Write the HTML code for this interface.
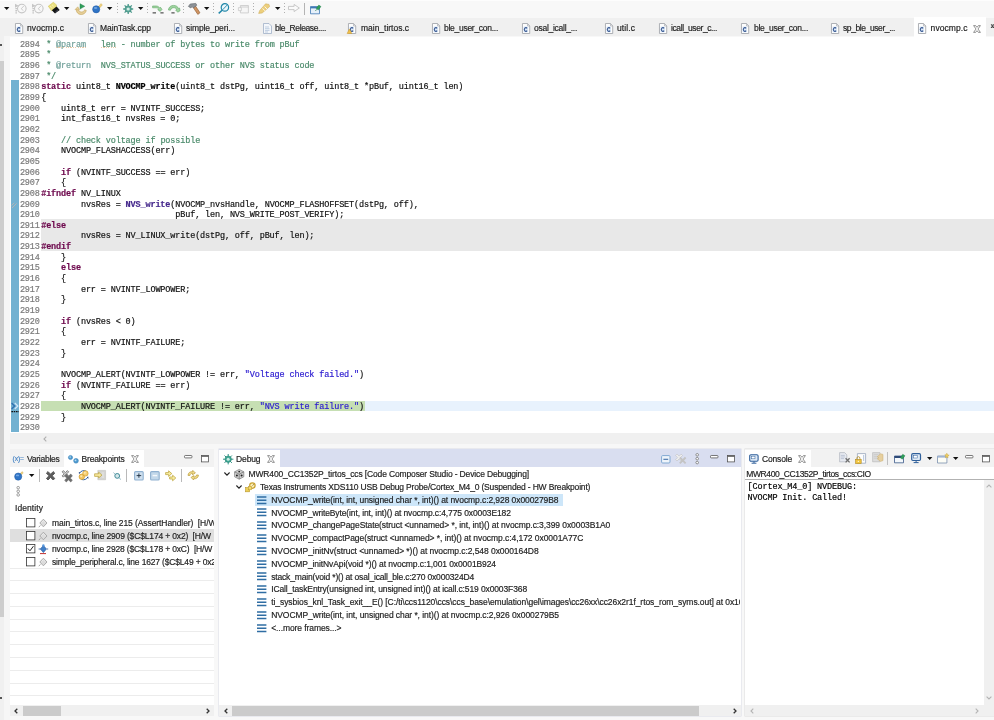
<!DOCTYPE html>
<html lang="en"><head><meta charset="utf-8"><title>Code Composer Studio</title>
<style>
html,body{margin:0;padding:0}
body{width:994px;height:720px;position:relative;overflow:hidden;background:#f8f8f8;font-family:"Liberation Sans",sans-serif;color:#1a1a1a}
#w{position:absolute;left:0;top:0;width:994px;height:720px;will-change:transform}
#w>div,#w>span,#w>svg{position:absolute}
span{-webkit-text-stroke:0.18px;white-space:pre;line-height:12px;margin-top:-5.6px}
.ui{font-size:8.5px;color:#1e1e1e}
.code{font-family:"Liberation Mono",monospace;font-size:8.5px;letter-spacing:-0.135px;color:#111;line-height:10.667px;margin-top:-5.33px}
.ln{font-family:"Liberation Mono",monospace;font-size:8.5px;letter-spacing:-0.135px;color:#7a7a7a;line-height:10.667px;margin-top:-5.33px}
.k{color:#6e0a4e;font-weight:bold}
.c{color:#4a8a6a}
.t{color:#6f9f98}
.s{color:#2a1ad0}
.f{font-weight:bold;color:#000}
.fc{color:#45288c;font-weight:bold}
.sq{text-decoration:underline wavy #e8c8a0 0.6px}
.con{font-family:"Liberation Mono",monospace;font-size:8.5px;letter-spacing:-0.135px;color:#000;line-height:10.667px;margin-top:-5.33px}
i{font-style:normal}
svg{overflow:visible}

</style></head>
<body>
<div id="w">
<div style="left:0px;top:0px;width:994px;height:18.2px;background:#f8f8f8;"></div><div style="left:0px;top:0px;width:994px;height:1.3px;background:#fdfdfd;"></div><div style="left:0px;top:18.2px;width:994px;height:18.3px;background:#f0f0f0;"></div><div style="left:0px;top:17.5px;width:10px;height:702.5px;background:#f0f0f0;"></div><div style="left:0px;top:60.5px;width:4px;height:556.2px;background:#cdcdcd;"></div><div style="left:10px;top:36.5px;width:984px;height:396.5px;background:#ffffff;"></div><div style="left:913.8px;top:16.6px;width:72.3px;height:20px;background:#ffffff;"></div><div style="left:10px;top:433px;width:984px;height:10.5px;background:#f0f0f0;"></div><div style="left:10px;top:443.5px;width:984px;height:6px;background:#f7f7f7;"></div><div style="left:41.3px;top:219.3px;width:952.7px;height:31.3px;background:#e8e8e8;"></div><div style="left:41.3px;top:401.0px;width:323.7px;height:10.2px;background:#c6dfb3;"></div><div style="left:365px;top:401.0px;width:629px;height:10.2px;background:#e8f2fd;"></div><div style="left:4px;top:36px;width:6px;height:684px;background:#f6f6f6;"></div><div style="left:11px;top:80px;width:8px;height:352.2px;background:#72b1d1;"></div><svg style="left:11px;top:401.5px" width="8" height="11" viewBox="0 0 8 11"><path d="M0.6 1l3 3-3 3" fill="none" stroke="#2f6fb0" stroke-width="1.3"/><path d="M3.8 1l3 3-3 3" fill="none" stroke="#cfe6fa" stroke-width="1.3"/><path d="M0.4 9.6h7.4" stroke="#111" stroke-width="1.2" stroke-dasharray="1.6 0.7"/></svg><svg style="left:10.5px;top:201.5px" width="7" height="7" viewBox="0 0 7 7"><path d="M0.6 3.4l2.6-2.6M1 6l4.6-4.6" fill="none" stroke="#b4b4b4" stroke-width="1"/></svg><span class="ln" style="left:19.9px;top:45.03px">2894</span><span class="code" style="left:41.2px;top:45.03px"><i class="c"> * </i><i class="t">@param</i><i class="c">   </i><i class="c">len</i><i class="c"> - number of bytes to write from pBuf</i></span><span class="ln" style="left:19.9px;top:55.68px">2895</span><span class="code" style="left:41.2px;top:55.68px"><i class="c"> *</i></span><span class="ln" style="left:19.9px;top:66.33px">2896</span><span class="code" style="left:41.2px;top:66.33px"><i class="c"> * </i><i class="t">@return</i><i class="c">  NVS_STATUS_SUCCESS or other NVS status code</i></span><span class="ln" style="left:19.9px;top:76.99px">2897</span><span class="code" style="left:41.2px;top:76.99px"><i class="c"> */</i></span><span class="ln" style="left:19.9px;top:87.64px">2898</span><span class="code" style="left:41.2px;top:87.64px"><i class="k">static</i> uint8_t <i class="f">NVOCMP_write</i>(uint8_t dstPg, uint16_t off, uint8_t *pBuf, uint16_t len)</span><span class="ln" style="left:19.9px;top:98.30px">2899</span><span class="code" style="left:41.2px;top:98.30px">{</span><span class="ln" style="left:19.9px;top:108.95px">2900</span><span class="code" style="left:41.2px;top:108.95px">    uint8_t err = NVINTF_SUCCESS;</span><span class="ln" style="left:19.9px;top:119.61px">2901</span><span class="code" style="left:41.2px;top:119.61px">    int_fast16_t nvsRes = 0;</span><span class="ln" style="left:19.9px;top:130.26px">2902</span><span class="ln" style="left:19.9px;top:140.91px">2903</span><span class="code" style="left:41.2px;top:140.91px">    <i class="c">// check voltage if possible</i></span><span class="ln" style="left:19.9px;top:151.57px">2904</span><span class="code" style="left:41.2px;top:151.57px">    NVOCMP_FLASHACCESS(err)</span><span class="ln" style="left:19.9px;top:162.22px">2905</span><span class="ln" style="left:19.9px;top:172.88px">2906</span><span class="code" style="left:41.2px;top:172.88px">    <i class="k">if</i> (NVINTF_SUCCESS == err)</span><span class="ln" style="left:19.9px;top:183.53px">2907</span><span class="code" style="left:41.2px;top:183.53px">    {</span><span class="ln" style="left:19.9px;top:194.18px">2908</span><span class="code" style="left:41.2px;top:194.18px"><i class="k">#ifndef</i> NV_LINUX</span><span class="ln" style="left:19.9px;top:204.84px">2909</span><span class="code" style="left:41.2px;top:204.84px">        nvsRes = <i class="fc">NVS_write</i>(NVOCMP_nvsHandle, NVOCMP_FLASHOFFSET(dstPg, off),</span><span class="ln" style="left:19.9px;top:215.49px">2910</span><span class="code" style="left:41.2px;top:215.49px">                           pBuf, len, NVS_WRITE_POST_VERIFY);</span><span class="ln" style="left:19.9px;top:226.15px">2911</span><span class="code" style="left:41.2px;top:226.15px"><i class="k">#else</i></span><span class="ln" style="left:19.9px;top:236.80px">2912</span><span class="code" style="left:41.2px;top:236.80px">        nvsRes = NV_LINUX_write(dstPg, off, pBuf, len);</span><span class="ln" style="left:19.9px;top:247.45px">2913</span><span class="code" style="left:41.2px;top:247.45px"><i class="k">#endif</i></span><span class="ln" style="left:19.9px;top:258.11px">2914</span><span class="code" style="left:41.2px;top:258.11px">    }</span><span class="ln" style="left:19.9px;top:268.76px">2915</span><span class="code" style="left:41.2px;top:268.76px">    <i class="k">else</i></span><span class="ln" style="left:19.9px;top:279.42px">2916</span><span class="code" style="left:41.2px;top:279.42px">    {</span><span class="ln" style="left:19.9px;top:290.07px">2917</span><span class="code" style="left:41.2px;top:290.07px">        err = NVINTF_LOWPOWER;</span><span class="ln" style="left:19.9px;top:300.72px">2918</span><span class="code" style="left:41.2px;top:300.72px">    }</span><span class="ln" style="left:19.9px;top:311.38px">2919</span><span class="ln" style="left:19.9px;top:322.03px">2920</span><span class="code" style="left:41.2px;top:322.03px">    <i class="k">if</i> (nvsRes &lt; 0)</span><span class="ln" style="left:19.9px;top:332.69px">2921</span><span class="code" style="left:41.2px;top:332.69px">    {</span><span class="ln" style="left:19.9px;top:343.34px">2922</span><span class="code" style="left:41.2px;top:343.34px">        err = NVINTF_FAILURE;</span><span class="ln" style="left:19.9px;top:353.99px">2923</span><span class="code" style="left:41.2px;top:353.99px">    }</span><span class="ln" style="left:19.9px;top:364.65px">2924</span><span class="ln" style="left:19.9px;top:375.30px">2925</span><span class="code" style="left:41.2px;top:375.30px">    NVOCMP_ALERT(NVINTF_LOWPOWER != err, <i class="s">&quot;Voltage check failed.&quot;</i>)</span><span class="ln" style="left:19.9px;top:385.95px">2926</span><span class="code" style="left:41.2px;top:385.95px">    <i class="k">if</i> (NVINTF_FAILURE == err)</span><span class="ln" style="left:19.9px;top:396.61px">2927</span><span class="code" style="left:41.2px;top:396.61px">    {</span><span class="ln" style="left:19.9px;top:407.26px">2928</span><span class="code" style="left:41.2px;top:407.26px">        NVOCMP_ALERT(NVINTF_FAILURE != err, <i class="s">&quot;NVS write failure.&quot;</i>)</span><span class="ln" style="left:19.9px;top:417.92px">2929</span><span class="code" style="left:41.2px;top:417.92px">    }</span><span class="ln" style="left:19.9px;top:428.57px">2930</span><svg style="left:14.6px;top:23.2px" width="8.2" height="11" viewBox="0 0 9 11" preserveAspectRatio="none"><path d="M0.5 0.5h5.5l2.5 2.5v7.5h-8z" fill="#fdfdfd" stroke="#a6a9ae" stroke-width="0.95"/><path d="M6 0.5v2.5h2.5" fill="none" stroke="#a6a9ae" stroke-width="0.7"/><rect x="1.6" y="3.6" width="5" height="5.6" rx="1" fill="#dce9f8"/><path d="M5.6 5.3a1.7 1.9 0 1 0 0 2.4" fill="none" stroke="#34548e" stroke-width="1.15"/></svg><span class="ui tab" style="letter-spacing:0.078px;left:27px;top:27.9px;">nvocmp.c</span><svg style="left:87.6px;top:23.2px" width="8.2" height="11" viewBox="0 0 9 11" preserveAspectRatio="none"><path d="M0.5 0.5h5.5l2.5 2.5v7.5h-8z" fill="#fdfdfd" stroke="#a6a9ae" stroke-width="0.95"/><path d="M6 0.5v2.5h2.5" fill="none" stroke="#a6a9ae" stroke-width="0.7"/><rect x="1.6" y="3.6" width="5" height="5.6" rx="1" fill="#dce9f8"/><path d="M5.6 5.3a1.7 1.9 0 1 0 0 2.4" fill="none" stroke="#34548e" stroke-width="1.15"/></svg><span class="ui tab" style="letter-spacing:-0.081px;left:100px;top:27.9px;">MainTask.cpp</span><svg style="left:173.6px;top:23.2px" width="8.2" height="11" viewBox="0 0 9 11" preserveAspectRatio="none"><path d="M0.5 0.5h5.5l2.5 2.5v7.5h-8z" fill="#fdfdfd" stroke="#a6a9ae" stroke-width="0.95"/><path d="M6 0.5v2.5h2.5" fill="none" stroke="#a6a9ae" stroke-width="0.7"/><rect x="1.6" y="3.6" width="5" height="5.6" rx="1" fill="#dce9f8"/><path d="M5.6 5.3a1.7 1.9 0 1 0 0 2.4" fill="none" stroke="#34548e" stroke-width="1.15"/></svg><span class="ui tab" style="letter-spacing:-0.112px;left:186px;top:27.9px;">simple_peri...</span><svg style="left:262.6px;top:23.2px" width="9" height="11" viewBox="0 0 9 11"><path d="M0.5 0.5h5.5l2.5 2.5v7.5h-8z" fill="#f4f7fb" stroke="#9fb0c6" stroke-width="0.8"/><path d="M2 4h4M2 5.7h4.5M2 7.4h4.5M2 9h3" stroke="#a9bbd6" stroke-width="0.7"/></svg><span class="ui tab" style="letter-spacing:-0.38px;left:275px;top:27.9px;">ble_Release....</span><svg style="left:347.6px;top:23.2px" width="8.2" height="11" viewBox="0 0 9 11" preserveAspectRatio="none"><path d="M0.5 0.5h5.5l2.5 2.5v7.5h-8z" fill="#fdfdfd" stroke="#a6a9ae" stroke-width="0.95"/><path d="M6 0.5v2.5h2.5" fill="none" stroke="#a6a9ae" stroke-width="0.7"/><rect x="1.6" y="3.6" width="5" height="5.6" rx="1" fill="#dce9f8"/><path d="M5.6 5.3a1.7 1.9 0 1 0 0 2.4" fill="none" stroke="#34548e" stroke-width="1.15"/><path d="M-1 10.5l2.6-4.6 2.6 4.6z" fill="#f2c14a" stroke="#c8962a" stroke-width="0.5"/></svg><span class="ui tab" style="letter-spacing:-0.014px;left:361px;top:27.9px;">main_tirtos.c</span><svg style="left:431.6px;top:23.2px" width="8.2" height="11" viewBox="0 0 9 11" preserveAspectRatio="none"><path d="M0.5 0.5h5.5l2.5 2.5v7.5h-8z" fill="#fdfdfd" stroke="#a6a9ae" stroke-width="0.95"/><path d="M6 0.5v2.5h2.5" fill="none" stroke="#a6a9ae" stroke-width="0.7"/><rect x="1.6" y="3.6" width="5" height="5.6" rx="1" fill="#dce9f8"/><path d="M5.6 5.3a1.7 1.9 0 1 0 0 2.4" fill="none" stroke="#34548e" stroke-width="1.15"/></svg><span class="ui tab" style="letter-spacing:-0.275px;left:444px;top:27.9px;">ble_user_con...</span><svg style="left:521.6px;top:23.2px" width="8.2" height="11" viewBox="0 0 9 11" preserveAspectRatio="none"><path d="M0.5 0.5h5.5l2.5 2.5v7.5h-8z" fill="#fdfdfd" stroke="#a6a9ae" stroke-width="0.95"/><path d="M6 0.5v2.5h2.5" fill="none" stroke="#a6a9ae" stroke-width="0.7"/><rect x="1.6" y="3.6" width="5" height="5.6" rx="1" fill="#dce9f8"/><path d="M5.6 5.3a1.7 1.9 0 1 0 0 2.4" fill="none" stroke="#34548e" stroke-width="1.15"/></svg><span class="ui tab" style="letter-spacing:-0.27px;left:534px;top:27.9px;">osal_icall_...</span><svg style="left:604.6px;top:23.2px" width="8.2" height="11" viewBox="0 0 9 11" preserveAspectRatio="none"><path d="M0.5 0.5h5.5l2.5 2.5v7.5h-8z" fill="#fdfdfd" stroke="#a6a9ae" stroke-width="0.95"/><path d="M6 0.5v2.5h2.5" fill="none" stroke="#a6a9ae" stroke-width="0.7"/><rect x="1.6" y="3.6" width="5" height="5.6" rx="1" fill="#dce9f8"/><path d="M5.6 5.3a1.7 1.9 0 1 0 0 2.4" fill="none" stroke="#34548e" stroke-width="1.15"/></svg><span class="ui tab" style="letter-spacing:0.086px;left:617px;top:27.9px;">util.c</span><svg style="left:658.6px;top:23.2px" width="8.2" height="11" viewBox="0 0 9 11" preserveAspectRatio="none"><path d="M0.5 0.5h5.5l2.5 2.5v7.5h-8z" fill="#fdfdfd" stroke="#a6a9ae" stroke-width="0.95"/><path d="M6 0.5v2.5h2.5" fill="none" stroke="#a6a9ae" stroke-width="0.7"/><rect x="1.6" y="3.6" width="5" height="5.6" rx="1" fill="#dce9f8"/><path d="M5.6 5.3a1.7 1.9 0 1 0 0 2.4" fill="none" stroke="#34548e" stroke-width="1.15"/></svg><span class="ui tab" style="letter-spacing:-0.398px;left:671px;top:27.9px;">icall_user_c...</span><svg style="left:740.6px;top:23.2px" width="8.2" height="11" viewBox="0 0 9 11" preserveAspectRatio="none"><path d="M0.5 0.5h5.5l2.5 2.5v7.5h-8z" fill="#fdfdfd" stroke="#a6a9ae" stroke-width="0.95"/><path d="M6 0.5v2.5h2.5" fill="none" stroke="#a6a9ae" stroke-width="0.7"/><rect x="1.6" y="3.6" width="5" height="5.6" rx="1" fill="#dce9f8"/><path d="M5.6 5.3a1.7 1.9 0 1 0 0 2.4" fill="none" stroke="#34548e" stroke-width="1.15"/></svg><span class="ui tab" style="letter-spacing:-0.275px;left:754px;top:27.9px;">ble_user_con...</span><svg style="left:830.6px;top:23.2px" width="8.2" height="11" viewBox="0 0 9 11" preserveAspectRatio="none"><path d="M0.5 0.5h5.5l2.5 2.5v7.5h-8z" fill="#fdfdfd" stroke="#a6a9ae" stroke-width="0.95"/><path d="M6 0.5v2.5h2.5" fill="none" stroke="#a6a9ae" stroke-width="0.7"/><rect x="1.6" y="3.6" width="5" height="5.6" rx="1" fill="#dce9f8"/><path d="M5.6 5.3a1.7 1.9 0 1 0 0 2.4" fill="none" stroke="#34548e" stroke-width="1.15"/></svg><span class="ui tab" style="letter-spacing:-0.408px;left:843px;top:27.9px;">sp_ble_user_...</span><svg style="left:918.2px;top:23.2px" width="8.2" height="11" viewBox="0 0 9 11" preserveAspectRatio="none"><path d="M0.5 0.5h5.5l2.5 2.5v7.5h-8z" fill="#fdfdfd" stroke="#a6a9ae" stroke-width="0.95"/><path d="M6 0.5v2.5h2.5" fill="none" stroke="#a6a9ae" stroke-width="0.7"/><rect x="1.6" y="3.6" width="5" height="5.6" rx="1" fill="#dce9f8"/><path d="M5.6 5.3a1.7 1.9 0 1 0 0 2.4" fill="none" stroke="#34548e" stroke-width="1.15"/></svg><span class="ui tab" style="letter-spacing:0.066px;left:930.6px;top:27.9px;">nvocmp.c</span><svg style="left:973px;top:24.5px" width="8" height="8" viewBox="0 0 8 8"><path d="M0.6 0.6h2l1.4 1.7 1.4-1.7h2l-2.4 3.4 2.4 3.4h-2l-1.4-1.7-1.4 1.7h-2l2.4-3.4z" fill="#fff" stroke="#666" stroke-width="0.7"/></svg><span class="ui" style="left:990.6px;top:25.2px;font-size:9px;color:#333;font-weight:bold">»</span><div style="left:56.3px;top:46.6px;width:29.700000000000003px;height:1px;background:repeating-linear-gradient(90deg,#e9c9a8 0 1.2px,transparent 1.2px 2.4px);"></div><div style="left:101px;top:46.6px;width:15px;height:1px;background:repeating-linear-gradient(90deg,#e9c9a8 0 1.2px,transparent 1.2px 2.4px);"></div><svg style="left:4.3px;top:7.4px" width="5.4" height="3" viewBox="0 0 5.4 3"><path d="M0 0h5.4l-2.7 3z" fill="#111"/></svg><svg style="left:13.5px;top:3px" width="13" height="11" viewBox="0 0 13 11"><path d="M1 0.8l3.6 2-3.6 2z" fill="#c6c6c6"/><path d="M2.2 5v5.4" stroke="#c6c6c6" stroke-width="1.6" stroke-dasharray="1.3 0.8"/><circle cx="7.8" cy="5.6" r="4.3" fill="none" stroke="#c6c6c6" stroke-width="1.1"/><path d="M9.8 3l-2.6 2.8 2.2 1.8" fill="none" stroke="#c6c6c6" stroke-width="0.9"/></svg><svg style="left:31px;top:3px" width="13" height="11" viewBox="0 0 13 11"><path d="M1 0.8l3.6 2-3.6 2z" fill="#c6c6c6"/><path d="M2.2 5v5.4" stroke="#c6c6c6" stroke-width="1.6" stroke-dasharray="1.3 0.8"/><circle cx="7.8" cy="5.6" r="4.3" fill="none" stroke="#c6c6c6" stroke-width="1.1"/><path d="M9.8 3l-2.6 2.8 2.2 1.8" fill="none" stroke="#c6c6c6" stroke-width="0.9"/></svg><svg style="left:48px;top:2.4px" width="12" height="12" viewBox="0 0 12 12"><path d="M0.3 4.2l5-3.9 3.2 2.6-0.3 2.4-4.6 3.5z" fill="#eadf7e" stroke="#cdbc4a" stroke-width="0.5"/><path d="M2 4.2l1.6 1.4M4 2.8l1.6 1.4" stroke="#fbf6c8" stroke-width="0.7"/><path d="M3.8 8.2l4.8-3.8 3.1 3.5-4.7 3.7z" fill="#131313"/><path d="M7.2 10.2l3-2.4" stroke="#56607a" stroke-width="0.7"/></svg><svg style="left:64px;top:7.4px" width="5.4" height="3" viewBox="0 0 5.4 3"><path d="M0 0h5.4l-2.7 3z" fill="#111"/></svg><svg style="left:75px;top:3px" width="12" height="12" viewBox="0 0 12 12"><path d="M5 0.7l4.8 2.6-4.8 2.8z" fill="#2f9e5a" stroke="#1f7a44" stroke-width="0.4"/><path d="M3.4 5.4c-0.6 2.2 1 3.6 3 3.6 1.6 0 2.8-0.8 3.2-2.2l1.7 0.7c-0.7 2.6-2.6 4-5 4-3.2 0-5.4-2.4-4.8-5.6z" fill="#e6cf98" stroke="#c4a45a" stroke-width="0.6"/><path d="M0 6.6l2.8-2.8 1.8 3.2z" fill="#e6cf98" stroke="#c4a45a" stroke-width="0.5"/></svg><svg style="left:92px;top:3px" width="11" height="11" viewBox="0 0 11 11"><path d="M6 4.2l3-3.6 1.4 1.4-3.2 3.4z" fill="#edd07a" stroke="#c9a64e" stroke-width="0.4"/><circle cx="4.2" cy="6.3" r="3.6" fill="#2f74c6" stroke="#1d57a3" stroke-width="0.5"/><ellipse cx="3.6" cy="5" rx="1.7" ry="0.9" fill="#7fb2ea" opacity="0.8"/></svg><svg style="left:107.3px;top:7.4px" width="5.4" height="3" viewBox="0 0 5.4 3"><path d="M0 0h5.4l-2.7 3z" fill="#111"/></svg><div style="left:116.5px;top:3px;width:1px;height:11px;background:repeating-linear-gradient(180deg,#b0b0b0 0 1.2px,transparent 1.2px 3.1px);"></div><svg style="left:122.6px;top:3.9px" width="10.4" height="10" viewBox="0 0 10.4 10"><g stroke="#4a9a8c" stroke-width="1.3"><path d="M5.2 0v10M0.2 5h10M1.6 1.4l7.2 7.2M8.8 1.4l-7.2 7.2"/></g><circle cx="5.2" cy="5" r="3.2" fill="#58a698" stroke="#3f8a7c" stroke-width="0.5"/><circle cx="5.2" cy="5" r="1.6" fill="#d4eee6"/></svg><svg style="left:138px;top:7.4px" width="5.4" height="3" viewBox="0 0 5.4 3"><path d="M0 0h5.4l-2.7 3z" fill="#111"/></svg><div style="left:147.0px;top:3px;width:1px;height:11px;background:repeating-linear-gradient(180deg,#b0b0b0 0 1.2px,transparent 1.2px 3.1px);"></div><svg style="left:151.5px;top:4.5px" width="12" height="9" viewBox="0 0 12 9"><path d="M0.6 1h3.6c1.6 0 2.6 0.8 3.4 2l0.8-0.8 1.6 2.2-1.8 2-2.4-1.6 0.8-0.8c-0.6-0.8-1.2-1.2-2.4-1.2h-3.6z" fill="#9fd39f" stroke="#5fa866" stroke-width="0.6"/><path d="M0.6 7.9h3.4M8.4 7.9h3.2" stroke="#2c2c2c" stroke-width="1"/></svg><svg style="left:168px;top:4.5px" width="12.5" height="9" viewBox="0 0 12.5 9"><path d="M0.4 5c0.4-3 2.4-4.6 5.2-4.6 2.4 0 4.2 1.2 5 3.2l0.9-0.6 0.6 2.8-2.4 1.4-2-2.2 1-0.5c-0.6-1.2-1.6-1.8-3-1.8-1.6 0-2.8 0.9-3.2 2.5z" fill="#9fd39f" stroke="#5fa866" stroke-width="0.6"/><path d="M3.4 7.9h3.2" stroke="#2c2c2c" stroke-width="1"/></svg><div style="left:183.0px;top:3px;width:1px;height:11px;background:repeating-linear-gradient(180deg,#b0b0b0 0 1.2px,transparent 1.2px 3.1px);"></div><svg style="left:188px;top:2.8px" width="12.5" height="11.4" viewBox="0 0 12.5 11.4"><path d="M5 4.2l2.2-1.6 4.8 7.2-2.2 1.6z" fill="#cf9463" stroke="#8f5a30" stroke-width="0.6"/><path d="M0.4 3.4l1.8-2.4 5.6-0.6 1 1.8-3.4 2.8-1.2-1.4-1.4 1.4z" fill="#8c9196" stroke="#5e6368" stroke-width="0.6"/></svg><svg style="left:204.3px;top:7.4px" width="5.4" height="3" viewBox="0 0 5.4 3"><path d="M0 0h5.4l-2.7 3z" fill="#111"/></svg><div style="left:213.0px;top:3px;width:1px;height:11px;background:repeating-linear-gradient(180deg,#b0b0b0 0 1.2px,transparent 1.2px 3.1px);"></div><svg style="left:218px;top:3.2px" width="11.5" height="10.8" viewBox="0 0 11.5 10.8"><circle cx="6.9" cy="4.4" r="3.7" fill="#eaf6fb" stroke="#1f86a8" stroke-width="1.2"/><path d="M4.6 6.8l4.6-4.8" stroke="#1f86a8" stroke-width="0.9"/><path d="M4.1 7.2l-3.4 3.2" stroke="#1f86a8" stroke-width="1.5"/></svg><div style="left:233.0px;top:3px;width:1px;height:11px;background:repeating-linear-gradient(180deg,#b0b0b0 0 1.2px,transparent 1.2px 3.1px);"></div><svg style="left:238px;top:4.5px" width="11" height="8.5" viewBox="0 0 11 8.5"><path d="M2.4 0.5h8v7.4h-8z" fill="#f6f6f6" stroke="#c6c6c6" stroke-width="0.8"/><path d="M2.4 2h8" stroke="#c6c6c6" stroke-width="0.8"/><path d="M0.4 2.6h3v3h-3z" fill="#f6f6f6" stroke="#c6c6c6" stroke-width="0.7"/></svg><div style="left:253.0px;top:3px;width:1px;height:11px;background:repeating-linear-gradient(180deg,#b0b0b0 0 1.2px,transparent 1.2px 3.1px);"></div><svg style="left:258px;top:3.2px" width="12.5" height="10.8" viewBox="0 0 12.5 10.8"><path d="M7.6 0.8l3.4 0.6 0.6 2.2-7.4 6.4-3.6 0.4 1.2-3z" fill="#edcf7c" stroke="#c9a64e" stroke-width="0.5"/><path d="M4.6 5.4l2.2 2.4M6.6 3.6l2.4 2.4" stroke="#fff" stroke-width="0.8"/></svg><svg style="left:274.5px;top:7.4px" width="5.4" height="3" viewBox="0 0 5.4 3"><path d="M0 0h5.4l-2.7 3z" fill="#111"/></svg><div style="left:283.5px;top:3px;width:1px;height:11px;background:repeating-linear-gradient(180deg,#b0b0b0 0 1.2px,transparent 1.2px 3.1px);"></div><svg style="left:288px;top:4.3px" width="12" height="8" viewBox="0 0 12 8"><path d="M0.5 2.4h5.6v-2l5.2 3.6-5.2 3.6v-2h-5.6z" fill="#fafafa" stroke="#bdbdbd" stroke-width="0.8"/></svg><div style="left:303.6px;top:2.5px;width:0.9px;height:12px;background:#b4b4b4;"></div><svg style="left:310px;top:3.5px" width="11.5" height="10.5" viewBox="0 0 11.5 10.5"><path d="M0.5 2.6h9v7.2h-9z" fill="#e6f0fa" stroke="#3f78b4" stroke-width="0.8"/><path d="M0.5 2.6h9v1.8h-9z" fill="#3f78b4"/><path d="M6.2 4.6l2.6-3.6 2.2 1.6-2.6 3.4z" fill="#2f9e5a" stroke="#1f7a44" stroke-width="0.4"/><path d="M6.6 5.4l-1.2 1.6" stroke="#1f7a44" stroke-width="0.7"/></svg><div style="left:0px;top:44.2px;width:1.6px;height:2.2px;background:#555;"></div><div style="left:0px;top:696.8px;width:1.6px;height:2.2px;background:#555;"></div><div style="left:10px;top:449.0px;width:204px;height:266.79999999999995px;background:#ffffff;"></div><div style="left:10px;top:449.0px;width:204px;height:18.3px;background:#f2f2f2;"></div><div style="left:64px;top:449.5px;width:80px;height:18.3px;background:#ffffff;"></div><div style="left:218.5px;top:449.0px;width:522.5px;height:266.79999999999995px;background:#ffffff;box-shadow:0 0 0 0.5px #d9dce6"></div><div style="left:218.5px;top:449.0px;width:522.5px;height:18.3px;background:#d9def0;"></div><div style="left:219px;top:449.5px;width:61px;height:18.3px;background:#ffffff;"></div><div style="left:744.5px;top:449.0px;width:249.5px;height:266.79999999999995px;background:#ffffff;box-shadow:0 0 0 0.5px #dcdcdc"></div><div style="left:744.5px;top:449.0px;width:249.5px;height:18.3px;background:#f2f2f2;"></div><div style="left:745px;top:449.5px;width:66px;height:18.3px;background:#ffffff;"></div><span class="ui" style="letter-spacing:-0.102px;left:12.5px;top:458.6px;color:#4a86c5;font-size:6.8px">(x)=</span><span class="ui ptab" style="letter-spacing:-0.257px;left:27px;top:458.3px;">Variables</span><svg style="left:67.5px;top:455px" width="11" height="8.5" viewBox="0 0 11 8.5"><circle cx="2.5" cy="2.5" r="2.1" fill="#4f9bd0" stroke="#2f78b0" stroke-width="0.5"/><circle cx="2.1" cy="2.1" r="0.8" fill="#b9dcf2"/><circle cx="8" cy="5.8" r="2.4" fill="#4f9bd0" stroke="#2f78b0" stroke-width="0.5"/><circle cx="7.5" cy="5.3" r="0.9" fill="#b9dcf2"/></svg><span class="ui ptab" style="letter-spacing:-0.172px;left:81.5px;top:458.3px;">Breakpoints</span><svg style="left:131px;top:455px" width="8" height="8" viewBox="0 0 8 8"><path d="M0.6 0.6h2l1.4 1.7 1.4-1.7h2l-2.4 3.4 2.4 3.4h-2l-1.4-1.7-1.4 1.7h-2l2.4-3.4z" fill="#fff" stroke="#666" stroke-width="0.7"/></svg><svg style="left:184px;top:454.5px" width="8.5" height="3.6" viewBox="0 0 8.5 3.6"><rect x="0.5" y="0.5" width="7.5" height="2.4" rx="0.8" fill="#fff" stroke="#555" stroke-width="0.8"/></svg><svg style="left:200.5px;top:454.5px" width="8" height="7.5" viewBox="0 0 8 7.5"><rect x="0.5" y="0.5" width="7" height="6.4" fill="#fff" stroke="#555" stroke-width="0.8"/><path d="M0.5 1.2h7" stroke="#555" stroke-width="1.2"/></svg><svg style="left:14px;top:471px" width="10" height="10" viewBox="0 0 10 10"><path d="M5.6 3.4l2.4-2.8 1.3 1.2-2.6 2.8z" fill="#edd07a" stroke="#c9a64e" stroke-width="0.4"/><circle cx="4.2" cy="5.6" r="3.6" fill="#2f74c6" stroke="#1d57a3" stroke-width="0.5"/><ellipse cx="3.5" cy="4.4" rx="1.7" ry="0.9" fill="#7fb2ea" opacity="0.8"/></svg><svg style="left:29.2px;top:474px" width="5.4" height="3" viewBox="0 0 5.4 3"><path d="M0 0h5.4l-2.7 3z" fill="#111"/></svg><div style="left:38.6px;top:469px;width:0.9px;height:12.5px;background:#b9b9b9;"></div><svg style="left:46px;top:471px" width="10.5" height="10" viewBox="0 0 10.5 10"><g transform="translate(1,0.6) scale(1.0)"><path d="M1 0l2.6 2.6 2.6-2.6 1.6 1.6-2.6 2.6 2.6 2.6-1.6 1.6-2.6-2.6-2.6 2.6-1.6-1.6 2.6-2.6-2.6-2.6z" fill="#5c5c5c" stroke="#5c5c5c" stroke-width="1" stroke-linejoin="round"/></g></svg><svg style="left:61.5px;top:469.5px" width="12" height="11.5" viewBox="0 0 12 11.5"><g transform="translate(0.6,0.6) scale(0.78)"><path d="M1 0l2.6 2.6 2.6-2.6 1.6 1.6-2.6 2.6 2.6 2.6-1.6 1.6-2.6-2.6-2.6 2.6-1.6-1.6 2.6-2.6-2.6-2.6z" fill="#d0d0d0" stroke="#808080" stroke-width="1.2" stroke-linejoin="round"/></g><g transform="translate(3.4,4.4) scale(0.86)"><path d="M1 0l2.6 2.6 2.6-2.6 1.6 1.6-2.6 2.6 2.6 2.6-1.6 1.6-2.6-2.6-2.6 2.6-1.6-1.6 2.6-2.6-2.6-2.6z" fill="#666" stroke="#777" stroke-width="1.2" stroke-linejoin="round"/></g></svg><svg style="left:78px;top:470.3px" width="11.5" height="10.5" viewBox="0 0 11.5 10.5"><path d="M1.4 3.4c1.2-2.6 4.4-3.4 6.6-2.2" fill="none" stroke="#2f62a8" stroke-width="1"/><path d="M10 6.8c-1 2.6-4.2 3.6-6.6 2.6" fill="none" stroke="#2f62a8" stroke-width="1"/><circle cx="3.8" cy="6.8" r="2.7" fill="#f2c766" stroke="#d09a2a" stroke-width="0.7"/><circle cx="7.4" cy="3.4" r="2.7" fill="#f6cf74" stroke="#d09a2a" stroke-width="0.7"/><circle cx="6.8" cy="2.8" r="1" fill="#fbe7b0"/><circle cx="3.2" cy="6.2" r="1" fill="#fbe7b0"/><path d="M0.6 2l1.6 0.4-0.6 1.6z" fill="#1f3f78"/><path d="M10.8 8.4l-1.6-0.4 0.6-1.6z" fill="#1f3f78"/></svg><svg style="left:94px;top:470.3px" width="12" height="10.2" viewBox="0 0 12 10.2"><path d="M3.8 0.4h7.8v9.4h-7.8z" fill="#d4d4d0" stroke="#bdbdb8" stroke-width="0.5"/><path d="M7.6 3h2.6M7.6 5h2.6M7.6 7h2.6" stroke="#f2f2f2" stroke-width="0.7"/><path d="M0.6 3.8h4v-1.6l3.4 2.9-3.4 2.9v-1.6h-4z" fill="#f7e79a" stroke="#b7a040" stroke-width="0.7"/></svg><svg style="left:112.5px;top:471.5px" width="8.5" height="8.5" viewBox="0 0 8.5 8.5"><path d="M0.4 0.6l7.6 7" stroke="#7fa9b8" stroke-width="0.8"/><circle cx="4.2" cy="3.9" r="2.4" fill="#d6e8ea" stroke="#3f8a98" stroke-width="1"/></svg><div style="left:126px;top:469px;width:0.9px;height:12.5px;background:#b9b9b9;"></div><svg style="left:133.5px;top:470.8px" width="10" height="9.6" viewBox="0 0 10 9.6"><rect x="0.6" y="0.6" width="8.6" height="8.4" rx="1" fill="#cfe0ef" stroke="#8fb0d0" stroke-width="1.1"/><path d="M2.6 4.6h4.6M4.9 2.4v4.4" stroke="#1c2c40" stroke-width="0.9"/></svg><svg style="left:150px;top:470.8px" width="10" height="9.6" viewBox="0 0 10 9.6"><rect x="0.6" y="0.6" width="8.6" height="8.4" rx="1" fill="#c3d8ea" stroke="#8fb0d0" stroke-width="1.1"/><path d="M2.6 4.6h4.6" stroke="#f4f8fc" stroke-width="1.4"/></svg><svg style="left:165px;top:470px" width="11.5" height="10.8" viewBox="0 0 11.5 10.8"><path d="M0.6 2.6h3v-1.8l3.2 2.8-3.2 2.8v-1.8h-3z" fill="#f8ec9e" stroke="#c0a848" stroke-width="0.8"/><path d="M4.6 7h3v-1.8l3.2 2.8-3.2 2.8v-1.8h-3z" fill="#f8ec9e" stroke="#c0a848" stroke-width="0.8"/></svg><div style="left:180.6px;top:469px;width:0.9px;height:12.5px;background:#b9b9b9;"></div><svg style="left:187px;top:470.3px" width="12.5" height="10.5" viewBox="0 0 12.5 10.5"><path d="M1 5.4c0-2.6 2.4-4.2 4.6-3.6l0.2-1.4 2.6 2.6-3 1.8 0.2-1.4c-1.4-0.2-2.6 0.8-2.6 2z" fill="#f1dc8a" stroke="#b99a3a" stroke-width="0.7"/><path d="M11.4 5c0 2.6-2.4 4.2-4.6 3.6l-0.2 1.4-2.6-2.6 3-1.8-0.2 1.4c1.4 0.2 2.6-0.8 2.6-2z" fill="#f1dc8a" stroke="#b99a3a" stroke-width="0.7"/></svg><svg style="left:15.8px;top:486px" width="4.4" height="10.6" viewBox="0 0 4.4 10.6"><g fill="#fff" stroke="#777" stroke-width="0.7"><circle cx="2.2" cy="1.7" r="1.3"/><circle cx="2.2" cy="5.3" r="1.3"/><circle cx="2.2" cy="8.9" r="1.3"/></g></svg><span class="ui" style="letter-spacing:0.074px;left:15px;top:507.8px;">Identity</span><div style="left:10px;top:529.2px;width:204px;height:12.6px;background:#dfdfdf;"></div><svg style="left:26px;top:518.4px" width="9.4" height="9.4" viewBox="0 0 9.4 9.4"><rect x="0.5" y="0.5" width="8.4" height="8.4" fill="#fff" stroke="#333" stroke-width="0.8"/></svg><svg style="left:37.5px;top:518px" width="10.5" height="10.5" viewBox="0 0 10.5 10.5"><path d="M1.8 5l3.6-3.8 3.6 3.8-3.6 3.8z" fill="#dcdcdc" stroke="#a4a4a4" stroke-width="0.9"/><path d="M3.4 4.6l2-2 1.8 2" fill="none" stroke="#f4f4f4" stroke-width="0.7"/><path d="M2.4 7.4l-1.6 1.8" stroke="#a4a4a4" stroke-width="1"/></svg><svg style="left:26px;top:531.1px" width="9.4" height="9.4" viewBox="0 0 9.4 9.4"><rect x="0.5" y="0.5" width="8.4" height="8.4" fill="#fff" stroke="#333" stroke-width="0.8"/></svg><svg style="left:37.5px;top:530.7px" width="10.5" height="10.5" viewBox="0 0 10.5 10.5"><path d="M1.8 5l3.6-3.8 3.6 3.8-3.6 3.8z" fill="#dcdcdc" stroke="#a4a4a4" stroke-width="0.9"/><path d="M3.4 4.6l2-2 1.8 2" fill="none" stroke="#f4f4f4" stroke-width="0.7"/><path d="M2.4 7.4l-1.6 1.8" stroke="#a4a4a4" stroke-width="1"/></svg><svg style="left:26px;top:544.1px" width="9.4" height="9.4" viewBox="0 0 9.4 9.4"><rect x="0.5" y="0.5" width="8.4" height="8.4" fill="#fff" stroke="#333" stroke-width="0.8"/><path d="M2 4.6l2 2.2 3.4-4.6" fill="none" stroke="#222" stroke-width="1"/></svg><svg style="left:37.5px;top:543.7px" width="10.5" height="10.5" viewBox="0 0 10.5 10.5"><path d="M2.4 5l3-3.6 3 3.6-3 3.6z" fill="#3f7fc8" stroke="#1f4f98" stroke-width="0.6"/><path d="M0.6 5h2M8.6 5h1.6" stroke="#1f4f98" stroke-width="0.8"/><circle cx="5.4" cy="1.4" r="1.2" fill="#5b9be0"/><path d="M2 9.6h6" stroke="#c03030" stroke-width="1"/></svg><svg style="left:26px;top:557.1px" width="9.4" height="9.4" viewBox="0 0 9.4 9.4"><rect x="0.5" y="0.5" width="8.4" height="8.4" fill="#fff" stroke="#333" stroke-width="0.8"/></svg><svg style="left:37.5px;top:556.7px" width="10.5" height="10.5" viewBox="0 0 10.5 10.5"><path d="M1.8 5l3.6-3.8 3.6 3.8-3.6 3.8z" fill="#dcdcdc" stroke="#a4a4a4" stroke-width="0.9"/><path d="M3.4 4.6l2-2 1.8 2" fill="none" stroke="#f4f4f4" stroke-width="0.7"/><path d="M2.4 7.4l-1.6 1.8" stroke="#a4a4a4" stroke-width="1"/></svg><span class="ui" style="letter-spacing:-0.084px;left:52px;top:523px;width:162px;overflow:hidden;">main_tirtos.c, line 215 (AssertHandler)  [H/W</span><span class="ui" style="letter-spacing:-0.152px;left:52px;top:535.7px;width:162px;overflow:hidden;">nvocmp.c, line 2909 ($C$L174 + 0x2)  [H/W</span><span class="ui" style="letter-spacing:-0.155px;left:52px;top:548.7px;width:162px;overflow:hidden;">nvocmp.c, line 2928 ($C$L178 + 0xC)  [H/W</span><span class="ui" style="letter-spacing:-0.169px;left:52px;top:561.7px;width:162px;overflow:hidden;">simple_peripheral.c, line 1627 ($C$L49 + 0x2</span><div style="left:10px;top:567.6px;width:204px;height:0.8px;background:#ececec;"></div><div style="left:10px;top:580.37px;width:204px;height:0.8px;background:#ececec;"></div><div style="left:10px;top:593.14px;width:204px;height:0.8px;background:#ececec;"></div><div style="left:10px;top:605.91px;width:204px;height:0.8px;background:#ececec;"></div><div style="left:10px;top:618.68px;width:204px;height:0.8px;background:#ececec;"></div><div style="left:10px;top:631.4499999999999px;width:204px;height:0.8px;background:#ececec;"></div><div style="left:10px;top:644.2199999999999px;width:204px;height:0.8px;background:#ececec;"></div><div style="left:10px;top:656.9899999999999px;width:204px;height:0.8px;background:#ececec;"></div><div style="left:10px;top:669.7599999999999px;width:204px;height:0.8px;background:#ececec;"></div><div style="left:10px;top:682.5299999999999px;width:204px;height:0.8px;background:#ececec;"></div><div style="left:10px;top:695.2999999999998px;width:204px;height:0.8px;background:#ececec;"></div><div style="left:10px;top:705.2px;width:204px;height:10.6px;background:#f0f0f0;"></div><div style="left:22.6px;top:705.6px;width:38.8px;height:10px;background:#cbcbcb;"></div><svg style="left:16px;top:710.5px" width="1" height="1" viewBox="0 0 1 1"><path d="M1.3 -2.3l-2.3 2.3 2.3 2.3" fill="none" stroke="#333" stroke-width="1.3"/></svg><svg style="left:208.3px;top:710.5px" width="1" height="1" viewBox="0 0 1 1"><path d="M-1.3 -2.3l2.3 2.3-2.3 2.3" fill="none" stroke="#333" stroke-width="1.3"/></svg><svg style="left:45px;top:438.6px" width="1" height="1" viewBox="0 0 1 1"><path d="M1.3 -2.3l-2.3 2.3 2.3 2.3" fill="none" stroke="#b0b0b0" stroke-width="1.1"/></svg><svg style="left:222.8px;top:453.6px" width="10.5" height="10.5" viewBox="0 0 10.5 10.5"><g stroke="#2f9384" stroke-width="1"><path d="M5.2 0v10.4M0 5.2h10.4M1.5 1.5l7.4 7.4M8.9 1.5l-7.4 7.4"/></g><circle cx="5.2" cy="5.2" r="3.2" fill="#3fa795" stroke="#27806f" stroke-width="0.5"/><circle cx="5.2" cy="5.2" r="1.5" fill="#cdeee4"/></svg><span class="ui ptab" style="letter-spacing:-0.113px;left:236px;top:458.3px;">Debug</span><svg style="left:266.5px;top:455px" width="8" height="8" viewBox="0 0 8 8"><path d="M0.6 0.6h2l1.4 1.7 1.4-1.7h2l-2.4 3.4 2.4 3.4h-2l-1.4-1.7-1.4 1.7h-2l2.4-3.4z" fill="#fff" stroke="#666" stroke-width="0.7"/></svg><svg style="left:661px;top:454.5px" width="9.6" height="8.6" viewBox="0 0 9.6 8.6"><rect x="0.6" y="0.6" width="8.4" height="7.4" rx="1" fill="#eef4fb" stroke="#7fa8d2" stroke-width="1"/><path d="M2.4 4.3h4.8" stroke="#3f6ea8" stroke-width="1.1"/></svg><svg style="left:676px;top:454px" width="11.5" height="10" viewBox="0 0 11.5 10"><g transform="translate(0.2,0.2) scale(0.8)"><path d="M1 0l2.6 2.6 2.6-2.6 1.6 1.6-2.6 2.6 2.6 2.6-1.6 1.6-2.6-2.6-2.6 2.6-1.6-1.6 2.6-2.6-2.6-2.6z" fill="#f4f4f4" stroke="#bdbdbd" stroke-width="0.8"/></g><g transform="translate(3.6,2.8) scale(0.86)"><path d="M1 0l2.6 2.6 2.6-2.6 1.6 1.6-2.6 2.6 2.6 2.6-1.6 1.6-2.6-2.6-2.6 2.6-1.6-1.6 2.6-2.6-2.6-2.6z" fill="#c4c4c4"/></g></svg><svg style="left:695.4px;top:452.8px" width="4.4" height="11.4" viewBox="0 0 4.4 11.4"><g fill="#fff" stroke="#666" stroke-width="0.7"><circle cx="2.2" cy="1.8" r="1.3"/><circle cx="2.2" cy="5.7" r="1.3"/><circle cx="2.2" cy="9.6" r="1.3"/></g></svg><svg style="left:709.5px;top:454.5px" width="8.5" height="3.6" viewBox="0 0 8.5 3.6"><rect x="0.5" y="0.5" width="7.5" height="2.4" rx="0.8" fill="#fff" stroke="#555" stroke-width="0.8"/></svg><svg style="left:726.6px;top:454.5px" width="8" height="7.5" viewBox="0 0 8 7.5"><rect x="0.5" y="0.5" width="7" height="6.4" fill="#fff" stroke="#555" stroke-width="0.8"/><path d="M0.5 1.2h7" stroke="#555" stroke-width="1.2"/></svg><svg style="left:224.4px;top:472.3px" width="6" height="4" viewBox="0 0 6 4"><path d="M0.4 0.5l2.6 2.7 2.6-2.7" fill="none" stroke="#222" stroke-width="1.1"/></svg><svg style="left:234px;top:469.3px" width="10.5" height="10.5" viewBox="0 0 10.5 10.5"><path d="M5.2 0.4l4.6 2.4v5l-4.6 2.4-4.6-2.4v-5z" fill="#cfcfcf" stroke="#7a7a7a" stroke-width="0.7"/><path d="M5.2 5.2v5M0.6 2.8l4.6 2.4 4.6-2.4" fill="none" stroke="#5a5a5a" stroke-width="0.6"/><circle cx="2.9" cy="6.4" r="1" fill="#222"/><circle cx="7.6" cy="6.4" r="1" fill="#222"/><circle cx="5.2" cy="2.6" r="0.9" fill="#222"/></svg><span class="ui" style="letter-spacing:-0.143px;left:248.5px;top:473.8px;">MWR400_CC1352P_tirtos_ccs [Code Composer Studio - Device Debugging]</span><svg style="left:235.8px;top:485.1px" width="6" height="4" viewBox="0 0 6 4"><path d="M0.4 0.5l2.6 2.7 2.6-2.7" fill="none" stroke="#222" stroke-width="1.1"/></svg><svg style="left:245px;top:482.1px" width="11.5" height="10.5" viewBox="0 0 11.5 10.5"><circle cx="7.4" cy="3.6" r="2.7" fill="#fbeeb8" stroke="#c9a230" stroke-width="1.2"/><path d="M7.4 3.6l1.6-1.4" stroke="#8a6d1c" stroke-width="0.7"/><rect x="0.6" y="5.6" width="4" height="4.2" fill="#edcf55" stroke="#b8962c" stroke-width="0.6"/><rect x="3.4" y="4.4" width="3.2" height="3.4" fill="#f3da72" stroke="#b8962c" stroke-width="0.5"/></svg><span class="ui" style="letter-spacing:-0.169px;left:260px;top:486.6px;">Texas Instruments XDS110 USB Debug Probe/Cortex_M4_0 (Suspended - HW Breakpoint)</span><div style="left:254.8px;top:493.90000000000003px;width:308.5px;height:12px;background:#cde6f9;"></div><svg style="left:257px;top:495.6px" width="9.4" height="8.6" viewBox="0 0 9.4 8.6"><path d="M0 1h9.4M0 4.3h9.4M0 7.6h9.4" stroke="#2f6da3" stroke-width="1.5"/></svg><span class="ui" style="letter-spacing:-0.081px;left:271.2px;top:499.40000000000003px;">NVOCMP_write(int, int, unsigned char *, int)() at nvocmp.c:2,928 0x000279B8</span><svg style="left:257px;top:508.40000000000003px" width="9.4" height="8.6" viewBox="0 0 9.4 8.6"><path d="M0 1h9.4M0 4.3h9.4M0 7.6h9.4" stroke="#2f6da3" stroke-width="1.5"/></svg><span class="ui" style="letter-spacing:-0.113px;left:271.2px;top:512.2px;">NVOCMP_writeByte(int, int, int)() at nvocmp.c:4,775 0x0003E182</span><svg style="left:257px;top:521.2px" width="9.4" height="8.6" viewBox="0 0 9.4 8.6"><path d="M0 1h9.4M0 4.3h9.4M0 7.6h9.4" stroke="#2f6da3" stroke-width="1.5"/></svg><span class="ui" style="letter-spacing:-0.077px;left:271.2px;top:525.0px;">NVOCMP_changePageState(struct &lt;unnamed&gt; *, int, int)() at nvocmp.c:3,399 0x0003B1A0</span><svg style="left:257px;top:534.0px" width="9.4" height="8.6" viewBox="0 0 9.4 8.6"><path d="M0 1h9.4M0 4.3h9.4M0 7.6h9.4" stroke="#2f6da3" stroke-width="1.5"/></svg><span class="ui" style="letter-spacing:-0.059px;left:271.2px;top:537.8px;">NVOCMP_compactPage(struct &lt;unnamed&gt; *, int)() at nvocmp.c:4,172 0x0001A77C</span><svg style="left:257px;top:546.8000000000001px" width="9.4" height="8.6" viewBox="0 0 9.4 8.6"><path d="M0 1h9.4M0 4.3h9.4M0 7.6h9.4" stroke="#2f6da3" stroke-width="1.5"/></svg><span class="ui" style="letter-spacing:-0.059px;left:271.2px;top:550.6px;">NVOCMP_initNv(struct &lt;unnamed&gt; *)() at nvocmp.c:2,548 0x000164D8</span><svg style="left:257px;top:559.6px" width="9.4" height="8.6" viewBox="0 0 9.4 8.6"><path d="M0 1h9.4M0 4.3h9.4M0 7.6h9.4" stroke="#2f6da3" stroke-width="1.5"/></svg><span class="ui" style="letter-spacing:-0.096px;left:271.2px;top:563.4px;">NVOCMP_initNvApi(void *)() at nvocmp.c:1,001 0x0001B924</span><svg style="left:257px;top:572.4000000000001px" width="9.4" height="8.6" viewBox="0 0 9.4 8.6"><path d="M0 1h9.4M0 4.3h9.4M0 7.6h9.4" stroke="#2f6da3" stroke-width="1.5"/></svg><span class="ui" style="letter-spacing:-0.17px;left:271.2px;top:576.2px;">stack_main(void *)() at osal_icall_ble.c:270 0x000324D4</span><svg style="left:257px;top:585.2px" width="9.4" height="8.6" viewBox="0 0 9.4 8.6"><path d="M0 1h9.4M0 4.3h9.4M0 7.6h9.4" stroke="#2f6da3" stroke-width="1.5"/></svg><span class="ui" style="letter-spacing:-0.117px;left:271.2px;top:589.0px;">ICall_taskEntry(unsigned int, unsigned int)() at icall.c:519 0x0003F368</span><svg style="left:257px;top:598.0px" width="9.4" height="8.6" viewBox="0 0 9.4 8.6"><path d="M0 1h9.4M0 4.3h9.4M0 7.6h9.4" stroke="#2f6da3" stroke-width="1.5"/></svg><span class="ui" style="letter-spacing:-0.07px;left:271.2px;top:601.8px;width:469.3px;overflow:hidden;">ti_sysbios_knl_Task_exit__E() [C:/ti\ccs1120\ccs\ccs_base\emulation\gel\images\cc26xx\cc26x2r1f_rtos_rom_syms.out] at 0x10</span><svg style="left:257px;top:610.8000000000001px" width="9.4" height="8.6" viewBox="0 0 9.4 8.6"><path d="M0 1h9.4M0 4.3h9.4M0 7.6h9.4" stroke="#2f6da3" stroke-width="1.5"/></svg><span class="ui" style="letter-spacing:-0.075px;left:271.2px;top:614.6px;">NVOCMP_write(int, int, unsigned char *, int)() at nvocmp.c:2,926 0x000279B5</span><svg style="left:257px;top:623.6000000000001px" width="9.4" height="8.6" viewBox="0 0 9.4 8.6"><path d="M0 1h9.4M0 4.3h9.4M0 7.6h9.4" stroke="#2f6da3" stroke-width="1.5"/></svg><span class="ui" style="letter-spacing:-0.08px;left:271.2px;top:627.4000000000001px;">&lt;...more frames...&gt;</span><div style="left:219px;top:705.2px;width:522px;height:10.6px;background:#f0f0f0;"></div><div style="left:232px;top:705.6px;width:467px;height:10px;background:#cbcbcb;"></div><svg style="left:225.8px;top:710.5px" width="1" height="1" viewBox="0 0 1 1"><path d="M1.3 -2.3l-2.3 2.3 2.3 2.3" fill="none" stroke="#333" stroke-width="1.3"/></svg><svg style="left:734.6px;top:710.5px" width="1" height="1" viewBox="0 0 1 1"><path d="M-1.3 -2.3l2.3 2.3-2.3 2.3" fill="none" stroke="#333" stroke-width="1.3"/></svg><svg style="left:749px;top:454px" width="10" height="10" viewBox="0 0 10 10"><rect x="0.7" y="0.7" width="8.4" height="6.6" rx="1.2" fill="#dfeaf6" stroke="#2f5f9a" stroke-width="1.1"/><rect x="2.4" y="2.2" width="3.6" height="2.6" fill="#fff" stroke="#2f5f9a" stroke-width="0.5"/><path d="M2.6 9.2h4.8M5 7.4v1.6" stroke="#2f5f9a" stroke-width="1"/></svg><span class="ui ptab" style="letter-spacing:-0.17px;left:762px;top:458.3px;">Console</span><svg style="left:798px;top:455px" width="8" height="8" viewBox="0 0 8 8"><path d="M0.6 0.6h2l1.4 1.7 1.4-1.7h2l-2.4 3.4 2.4 3.4h-2l-1.4-1.7-1.4 1.7h-2l2.4-3.4z" fill="#fff" stroke="#666" stroke-width="0.7"/></svg><svg style="left:839px;top:452.4px" width="11.5" height="10.8" viewBox="0 0 11.5 10.8"><path d="M0.6 0.6h5l2.2 2.2v7h-7.2z" fill="#e6e9f0" stroke="#a4a9b4" stroke-width="0.6"/><path d="M1.8 3.4h4M1.8 5h4M1.8 6.6h3.2" stroke="#aeb8cc" stroke-width="0.7"/><path d="M6.6 6.2l4 4.2M10.6 6.2l-4 4.2" stroke="#6e6e6e" stroke-width="1.3"/></svg><svg style="left:855px;top:452.6px" width="11.5" height="11.2" viewBox="0 0 11.5 11.2"><path d="M2.4 0.6h8.2v9.6h-8.2z" fill="#fdfdfd" stroke="#8c9cb4" stroke-width="0.7"/><path d="M8.6 2.4v6" stroke="#7f9cc6" stroke-width="1.2" stroke-dasharray="1.2 0.8"/><rect x="0.6" y="6.4" width="5.6" height="4.2" fill="#f0c440" stroke="#b48a1e" stroke-width="0.6"/><path d="M1.9 6.4v-1.2a1.5 1.5 0 0 1 3 0v1.2" fill="none" stroke="#b48a1e" stroke-width="0.8"/><circle cx="3.4" cy="8.4" r="0.7" fill="#fff4c8"/></svg><svg style="left:872px;top:452.4px" width="11.5" height="10.6" viewBox="0 0 11.5 10.6"><path d="M0.6 0.6h7.4v9.2h-7.4z" fill="#dcdcdc" stroke="#b4b4b4" stroke-width="0.6"/><path d="M1.8 2.6h4.6M1.8 4.4h4.6M1.8 6.2h4.6" stroke="#c6c6c6" stroke-width="0.7"/><path d="M5.2 4.8l3.4-3 2.4 0.6v6.2l-2.4 0.8-3.4-2.6 1.8-1z" fill="#e6cf9e" stroke="#c9ad6e" stroke-width="0.5"/></svg><div style="left:886.6px;top:452px;width:0.9px;height:12.5px;background:#c0c0c0;"></div><svg style="left:894px;top:452.8px" width="11.5" height="10.5" viewBox="0 0 11.5 10.5"><path d="M0.5 3h9v6.8h-9z" fill="#f4f8fc" stroke="#3a5888" stroke-width="0.8"/><path d="M0.5 3h9v2h-9z" fill="#2f4a78"/><path d="M6.2 4.8l2.6-3.6 2.2 1.6-2.6 3.4z" fill="#2f9e5a" stroke="#1f7a44" stroke-width="0.4"/></svg><svg style="left:911px;top:452.8px" width="10.5" height="10.5" viewBox="0 0 10.5 10.5"><rect x="0.7" y="0.7" width="8.8" height="6.8" rx="1.2" fill="#dfeaf6" stroke="#2f5f9a" stroke-width="1.2"/><rect x="2.6" y="2.4" width="3.6" height="2.6" fill="#fff" stroke="#2f5f9a" stroke-width="0.5"/><path d="M2.6 9.6h5M5.1 7.6v1.8" stroke="#2f5f9a" stroke-width="1"/></svg><svg style="left:926.6px;top:456.6px" width="5.4" height="3" viewBox="0 0 5.4 3"><path d="M0 0h5.4l-2.7 3z" fill="#111"/></svg><svg style="left:937px;top:452.8px" width="12.5" height="10.5" viewBox="0 0 12.5 10.5"><path d="M0.5 3h9.4v7h-9.4z" fill="#fdfdf6" stroke="#7a8fae" stroke-width="0.8"/><path d="M0.5 3h9.4v1.6h-9.4z" fill="#9fb4d4"/><path d="M9.8 0.2l0.8 1.6 1.6 0.4-1.4 1 0.2 1.8-1.2-1-1.4 0.8 0.4-1.8-1-1.2h1.4z" fill="#f0d060" stroke="#c0982c" stroke-width="0.4"/></svg><svg style="left:953.4px;top:456.6px" width="5.4" height="3" viewBox="0 0 5.4 3"><path d="M0 0h5.4l-2.7 3z" fill="#111"/></svg><svg style="left:965px;top:454.5px" width="8.5" height="3.6" viewBox="0 0 8.5 3.6"><rect x="0.5" y="0.5" width="7.5" height="2.4" rx="0.8" fill="#fff" stroke="#555" stroke-width="0.8"/></svg><svg style="left:982px;top:454.5px" width="8" height="7.5" viewBox="0 0 8 7.5"><rect x="0.5" y="0.5" width="7" height="6.4" fill="#fff" stroke="#555" stroke-width="0.8"/><path d="M0.5 1.2h7" stroke="#555" stroke-width="1.2"/></svg><span class="ui" style="letter-spacing:-0.362px;left:746.2px;top:473.6px;">MWR400_CC1352P_tirtos_ccs:CIO</span><div style="left:745px;top:479.1px;width:249px;height:0.8px;background:#b2b2b2;"></div><span class="con" style="left:747.6px;top:487.8px">[Cortex_M4_0] NVDEBUG:</span><span class="con" style="left:747.6px;top:498.3px">NVOCMP Init. Called!</span><div style="left:984px;top:480px;width:10px;height:225.5px;background:#f0f0f0;"></div><div style="left:745px;top:705.2px;width:249px;height:10.6px;background:#f0f0f0;"></div><svg style="left:989px;top:486.4px" width="1" height="1" viewBox="0 0 1 1"><path d="M-2.4 1.4l2.4-2.4 2.4 2.4" fill="none" stroke="#b4b4b4" stroke-width="1.1"/></svg><svg style="left:989px;top:698.4px" width="1" height="1" viewBox="0 0 1 1"><path d="M-2.4 -1.4l2.4 2.4 2.4-2.4" fill="none" stroke="#b4b4b4" stroke-width="1.1"/></svg><svg style="left:752.3px;top:710.5px" width="1" height="1" viewBox="0 0 1 1"><path d="M1.3 -2.3l-2.3 2.3 2.3 2.3" fill="none" stroke="#b4b4b4" stroke-width="1.1"/></svg><svg style="left:977.4px;top:710.5px" width="1" height="1" viewBox="0 0 1 1"><path d="M-1.3 -2.3l2.3 2.3-2.3 2.3" fill="none" stroke="#b4b4b4" stroke-width="1.1"/></svg>
</div>
</body></html>
